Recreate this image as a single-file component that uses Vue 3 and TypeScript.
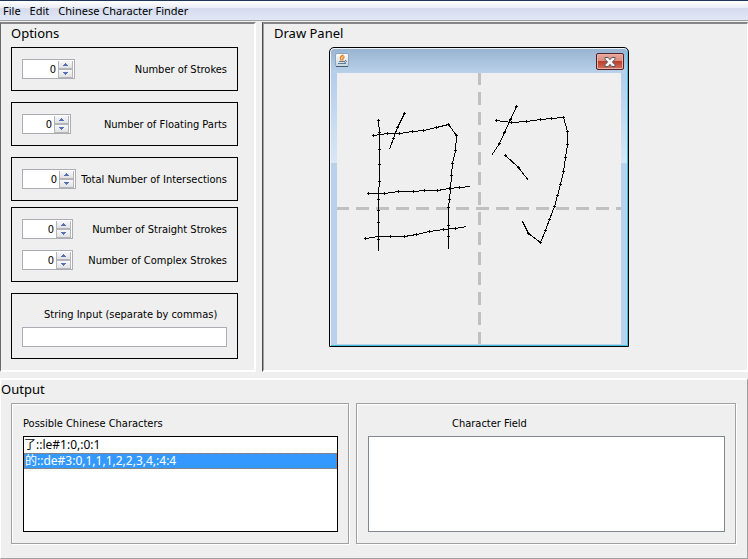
<script setup lang="ts">
import { ref } from 'vue'

type Point = [number, number]

interface Spinner {
  id: string
  label: string
  size: 'narrow' | 'medium' | 'wide' | 'widest'
}

const menus = ['File', 'Edit', 'Chinese Character Finder']

const groups: Spinner[][] = [
  [{ id: 'strokes', label: 'Number of Strokes', size: 'wide' }],
  [{ id: 'floating', label: 'Number of Floating Parts', size: 'narrow' }],
  [{ id: 'intersections', label: 'Total Number of Intersections', size: 'widest' }],
  [
    { id: 'straight', label: 'Number of Straight Strokes', size: 'medium' },
    { id: 'complex', label: 'Number of Complex Strokes', size: 'medium' },
  ],
]

const values = ref<Record<string, number>>({
  strokes: 0,
  floating: 0,
  intersections: 0,
  straight: 0,
  complex: 0,
})

function step(id: string, delta: number) {
  values.value[id] = Math.max(0, values.value[id] + delta)
}

const stringInput = ref('')
const characterField = ref('')
const results = ['了::le#1:0,:0:1', '的::de#3:0,1,1,1,2,2,3,4,:4:4']
const selected = ref(results[1])

const strokes: Point[][] = [
  [[41, 47], [42, 59], [42, 76], [42, 91], [42, 108], [41, 120], [41, 126], [41, 137], [41, 149], [41, 166], [41, 177]],
  [[36, 62], [50, 60], [62, 60], [75, 58], [86, 57], [99, 54], [111, 51], [119, 62], [118, 77], [115, 90], [114, 102], [113, 115], [112, 126], [111, 134], [111, 152], [111, 163], [111, 175]],
  [[67, 40], [60, 54], [56, 65], [52, 76]],
  [[31, 120], [47, 120], [61, 118], [76, 118], [87, 117], [100, 117], [112, 115], [122, 114], [133, 113]],
  [[28, 165], [41, 163], [53, 163], [67, 163], [79, 161], [92, 158], [106, 156], [118, 155], [129, 153]],
  [[179, 33], [173, 46], [167, 59], [162, 70], [154, 82]],
  [[159, 47], [174, 49], [189, 48], [203, 46], [214, 45], [226, 44], [230, 58], [230, 71], [228, 84], [226, 98], [223, 111], [220, 122], [217, 133], [212, 146], [208, 157], [203, 169], [191, 160], [185, 148]],
  [[168, 82], [181, 94], [191, 107]],
]

const linePath = (points: Point[]) => 'M' + points.map(([x, y]) => `${x} ${y}`).join('L')
const markPath = strokes
  .flatMap((points) => points.slice(0, -1))
  .map(([x, y]) => `M${x - 1} ${y}h3v1h-3zM${x} ${y - 1}h1v3h-1z`)
  .join('')
</script>

<template>
  <div class="app">
    <nav class="menubar">
      <button v-for="menu in menus" :key="menu" type="button">{{ menu }}</button>
    </nav>

    <main class="workspace">
      <section class="options">
        <h2>Options</h2>
        <div v-for="(group, i) in groups" :key="i" class="card" :class="{ tight: i === 3 }">
          <div v-for="item in group" :key="item.id" class="row">
            <div class="spinner" :class="item.size">
              <input :id="item.id" v-model.number="values[item.id]" type="number" min="0" />
              <div class="steppers">
                <button type="button" aria-label="Increase" @click="step(item.id, 1)">
                  <svg viewBox="0 0 5 3"><path d="M2 0h1v1h1v1h1v1H0V2h1V1h1z" /></svg>
                </button>
                <button type="button" aria-label="Decrease" @click="step(item.id, -1)">
                  <svg viewBox="0 0 5 3"><path d="M0 0h5v1H4v1H3v1H2V2H1V1H0z" /></svg>
                </button>
              </div>
            </div>
            <label :for="item.id">{{ item.label }}</label>
          </div>
        </div>
        <div class="card text-card">
          <label for="string-input">String Input (separate by commas)</label>
          <input id="string-input" v-model="stringInput" type="text" />
        </div>
      </section>

      <section class="draw">
        <h2>Draw Panel</h2>
        <div class="window">
          <header class="titlebar">
            <svg class="java" viewBox="0 0 14 14">
              <defs>
                <linearGradient id="tile" x1="0" y1="0" x2="0" y2="1">
                  <stop offset="0" stop-color="#ffffff" />
                  <stop offset="1" stop-color="#c9d3dc" />
                </linearGradient>
              </defs>
              <rect x="0.5" y="0.5" width="13" height="13" rx="1.5" fill="url(#tile)" stroke="#8fa6bd" />
              <path d="M1 13.500h12" stroke="#42617f" />
              <path d="M8.500 2C5 3.500 4.500 5 6.500 7.500M9.500 3.500C7 5 8.500 5.500 7.500 7.500" fill="none" stroke="#ee8322" stroke-width="1.500" />
              <path d="M4 8.500h6M3 10.500h8M10 7.500c2-.5 2 2-.5 2" fill="none" stroke="#5f7c98" />
            </svg>
            <button type="button" class="close" aria-label="Close">
              <svg viewBox="0 0 12 10">
                <path d="M1 .5h3.200L6 2.700 7.800.5H11v1.700L8.400 5 11 7.800v1.700H7.800L6 7.300 4.200 9.500H1V7.800L3.600 5 1 2.200z" fill="#f4f4f4" stroke="#545a66" />
              </svg>
            </button>
          </header>
          <div class="frame">
            <svg class="canvas" viewBox="0 0 284 271" shape-rendering="crispEdges">
              <path d="M142.500 -1V271M-1 135.500H284" stroke="#c0c0c0" stroke-width="3" stroke-dasharray="13 7" />
              <g transform="translate(.5 .5)" fill="none" stroke="#000">
                <path v-for="(points, i) in strokes" :key="i" :d="linePath(points)" />
              </g>
              <path :d="markPath" fill="#000" />
            </svg>
          </div>
        </div>
      </section>
    </main>

    <section class="output">
      <h2>Output</h2>
      <div class="panes">
        <div class="pane">
          <label for="results">Possible Chinese Characters</label>
          <select id="results" v-model="selected" size="5">
            <option v-for="result in results" :key="result" :value="result">{{ result }}</option>
          </select>
        </div>
        <div class="pane">
          <label for="field" class="indented">Character Field</label>
          <textarea id="field" v-model="characterField"></textarea>
        </div>
      </div>
    </section>
  </div>
</template>

<style>
body {
  background: #efefef;
}
</style>

<style scoped>
.app,
.app * {
  box-sizing: border-box;
}

.app {
  display: flex;
  flex-direction: column;
  min-height: 100vh;
  background: #efefef;
  color: #000;
  font: 11px/16px "DejaVu Sans Condensed", "Noto Sans CJK SC", sans-serif;
}

button,
input,
select,
textarea {
  margin: 0;
  padding: 0;
  border: 0;
  border-radius: 0;
  outline: 0;
  color: inherit;
  font: inherit;
}

h2 {
  margin: 0;
  font: 13px/20px "Noto Sans", sans-serif;
}

.menubar {
  display: flex;
  gap: 9px;
  height: 21px;
  padding: 0 3px;
  border-top: 1px solid #1d3557;
  border-bottom: 1px solid #a0a0a0;
  background: linear-gradient(#ffffff 0, #e9edf7 7px, #d4dbed 7px, #e1e7f6 19px);
  font-family: "Noto Sans", sans-serif;
}

.menubar button {
  background: none;
  line-height: 19px;
}

.workspace {
  display: flex;
  gap: 6px;
  margin-top: 1px;
}

.options,
.draw {
  border-style: solid;
  border-color: #858585 #fff #fff #696969;
  border-top-width: 2px;
  border-bottom-width: 2px;
}

.options {
  flex: 0 0 256px;
  display: flex;
  flex-direction: column;
  gap: 11px;
  padding: 0 16px 11px 10px;
  border-left-width: 1px;
  border-right-width: 2px;
}

.options h2 {
  height: 12px;
  line-height: 18px;
}

.card {
  display: flex;
  flex-direction: column;
  gap: 11px;
  padding: 11px 10px;
  border: 1px solid #000;
}

.card.tight {
  margin-top: -5px;
}

.row {
  display: flex;
  align-items: center;
  justify-content: space-between;
}

.row label {
  line-height: 18px;
  padding-top: 2px;
}

.spinner {
  display: flex;
  height: 20px;
  border: 1px solid #abadb3;
  background: #fff;
}

.narrow {
  width: 49px;
}

.medium {
  width: 51px;
}

.wide {
  width: 53px;
}

.widest {
  width: 54px;
}

.spinner input {
  flex: 1;
  min-width: 0;
  padding: 1px 2px 0 0;
  background: #fff;
  text-align: right;
  appearance: textfield;
}

.spinner input::-webkit-inner-spin-button {
  appearance: none;
  margin: 0;
}

.steppers {
  display: flex;
  flex-direction: column;
  gap: 2px;
  width: 16px;
  padding: 0 1px 1px;
  background: #b4b5ba;
  border-right: 1px solid #fff;
  border-top: 1px solid #fff;
}

.steppers button {
  flex: 1;
  display: flex;
  align-items: center;
  justify-content: center;
  background: linear-gradient(#f8f8f8, #e2e2e2);
}

.steppers svg {
  width: 5px;
  height: 3px;
  fill: #566fb5;
}

.text-card {
  gap: 4px;
}

.text-card label {
  height: 18px;
  padding-left: 22px;
  line-height: 20px;
}

.text-card input {
  width: 100%;
  height: 20px;
  padding: 0 3px;
  border: 1px solid #abadb3;
  background: #fff;
}

.draw {
  flex: 1;
  padding: 0 10px;
  border-left: 2px groove #a0a0a0;
  border-right-width: 1px;
}

.draw h2 {
  height: 23px;
  line-height: 18px;
}

.window {
  width: 300px;
  margin-left: 55px;
  border: 1px solid #000;
  border-radius: 5px 5px 0 0;
  background: #b9d1ea;
  box-shadow: inset 1px 1px 0 #eef4fa, inset -1px -1px 0 #3cc0e0;
}

.titlebar {
  display: flex;
  justify-content: space-between;
  height: 24px;
  margin: 1px 1px 0;
  padding: 4px 3px 0 4px;
  border-radius: 4px 4px 0 0;
  background: linear-gradient(#99b4d1, #b9d1ea);
}

.java {
  width: 14px;
  height: 14px;
}

.close {
  display: flex;
  align-items: center;
  justify-content: center;
  width: 28px;
  height: 17px;
  border: 1px solid #52202a;
  border-radius: 2px;
  background: linear-gradient(#e7a99d, #d98a7c 7px, #b83d28 7px, #d0705c);
  box-shadow: inset 0 0 0 1px #e9b0a6;
}

.close svg {
  width: 12px;
  height: 10px;
}

.frame {
  margin: 0 1px;
  padding: 0 6px 2px;
  background: linear-gradient(#b4cdea, #d9e7f6 90px, #b9d1ea 90px);
  background-size: 100% calc(100% - 1px);
  background-repeat: no-repeat;
}

.canvas {
  display: block;
  width: 100%;
  background: #efefef;
}

.output {
  flex: 1;
  display: flex;
  flex-direction: column;
  margin-top: 6px;
  border: 1px solid #a0a0a0;
  border-top: 2px solid #fff;
  border-left-color: #fff;
}

.output h2 {
  height: 23px;
  line-height: 18px;
}

.panes {
  flex: 1;
  display: grid;
  grid-template-columns: 338fr 380fr;
  gap: 7px;
  margin: 0 11px 14px 10px;
}

.pane {
  display: flex;
  flex-direction: column;
  padding: 11px 10px 11px 11px;
  border: 1px solid #a0a0a0;
  box-shadow: 1px 1px 0 #fff, inset 1px 1px 0 #fff;
}

.pane label {
  height: 21px;
  line-height: 18px;
}

.pane .indented {
  padding-left: 84px;
}

.pane select,
.pane textarea {
  flex: 1;
  width: 100%;
  min-height: 96px;
  background: #fff;
}

.pane select {
  border: 1px solid #000;
  overflow: hidden;
  font: 12px/16px "Noto Sans", "Noto Sans CJK SC", sans-serif;
}

.pane option {
  display: block;
  height: 16px;
  min-height: 16px;
  padding: 3px 0 0;
  text-box: trim-both cap alphabetic;
}

.pane option:checked {
  padding-top: 2px;
  border: 1px dotted #d0701c;
  background: linear-gradient(#3399ff, #3399ff);
  -webkit-text-fill-color: #fff;
}

.pane textarea {
  border: 1px solid #828790;
  resize: none;
}
</style>
